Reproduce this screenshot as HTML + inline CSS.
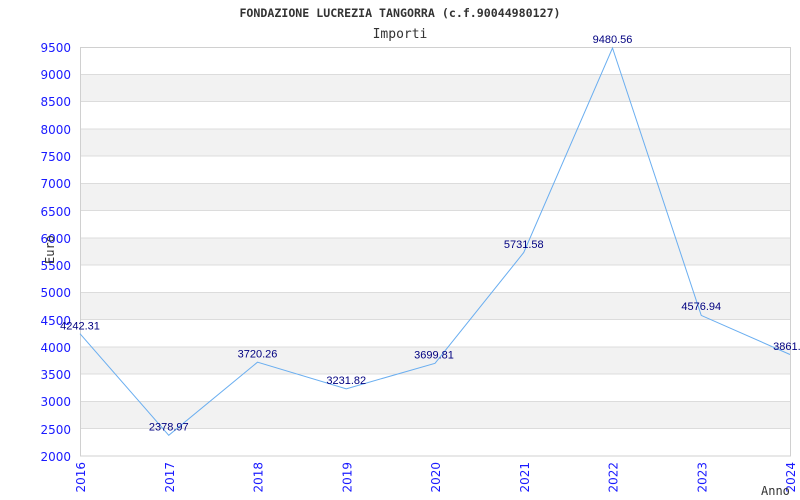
<!DOCTYPE html>
<html><head><meta charset="utf-8"><style>
html,body{margin:0;padding:0;background:#fff;width:800px;height:500px;overflow:hidden}
</style></head><body>
<svg width="800" height="500" xmlns="http://www.w3.org/2000/svg">
<g fill="#f2f2f2">
<rect x="80" y="74.3" width="710" height="27.3"/>
<rect x="80" y="128.8" width="710" height="27.3"/>
<rect x="80" y="183.3" width="710" height="27.3"/>
<rect x="80" y="237.8" width="710" height="27.3"/>
<rect x="80" y="292.4" width="710" height="27.3"/>
<rect x="80" y="346.9" width="710" height="27.3"/>
<rect x="80" y="401.5" width="710" height="27.3"/>
</g>
<g stroke="#dcdcdc" stroke-width="1">
<line x1="80" y1="74.5" x2="790" y2="74.5"/><line x1="80" y1="101.5" x2="790" y2="101.5"/>
<line x1="80" y1="129" x2="790" y2="129"/><line x1="80" y1="156" x2="790" y2="156"/>
<line x1="80" y1="183.5" x2="790" y2="183.5"/><line x1="80" y1="210.5" x2="790" y2="210.5"/>
<line x1="80" y1="238" x2="790" y2="238"/><line x1="80" y1="265" x2="790" y2="265"/>
<line x1="80" y1="292.5" x2="790" y2="292.5"/><line x1="80" y1="319.5" x2="790" y2="319.5"/>
<line x1="80" y1="347" x2="790" y2="347"/><line x1="80" y1="374" x2="790" y2="374"/>
<line x1="80" y1="401.5" x2="790" y2="401.5"/><line x1="80" y1="428.5" x2="790" y2="428.5"/>
</g>
<rect x="80.5" y="47.5" width="710" height="408.5" fill="none" stroke="#d0d0d0"/>
<polyline fill="none" stroke="#6aaef0" stroke-width="1" points="80,333.7 168.75,435.3 257.5,362.2 346.25,388.8 435,363.3 523.75,252.5 612.5,48 701.25,315.4 790,354.5"/>
<g font-family="DejaVu Sans, sans-serif" font-size="12" fill="#1a1aff" text-anchor="end">
<text x="71" y="52">9500</text><text x="71" y="79">9000</text><text x="71" y="106">8500</text>
<text x="71" y="134">8000</text><text x="71" y="161">7500</text><text x="71" y="188">7000</text>
<text x="71" y="216">6500</text><text x="71" y="243">6000</text><text x="71" y="270">5500</text>
<text x="71" y="297">5000</text><text x="71" y="325">4500</text><text x="71" y="352">4000</text>
<text x="71" y="379">3500</text><text x="71" y="406">3000</text><text x="71" y="434">2500</text>
<text x="71" y="461">2000</text>
</g>
<g font-family="DejaVu Sans, sans-serif" font-size="12" fill="#1a1aff" text-anchor="end">
<text transform="translate(85,462) rotate(-90)">2016</text>
<text transform="translate(173.75,462) rotate(-90)">2017</text>
<text transform="translate(262.5,462) rotate(-90)">2018</text>
<text transform="translate(351.25,462) rotate(-90)">2019</text>
<text transform="translate(440,462) rotate(-90)">2020</text>
<text transform="translate(528.75,462) rotate(-90)">2021</text>
<text transform="translate(617.5,462) rotate(-90)">2022</text>
<text transform="translate(706.25,462) rotate(-90)">2023</text>
<text transform="translate(795,462) rotate(-90)">2024</text>
</g>
<g font-family="Liberation Sans, sans-serif" font-size="11" fill="#000080" text-anchor="middle">
<text x="80" y="329.5">4242.31</text>
<text x="168.75" y="430.5">2378.97</text>
<text x="257.5" y="357.5">3720.26</text>
<text x="346.25" y="384">3231.82</text>
<text x="434" y="358.5">3699.81</text>
<text x="523.75" y="248">5731.58</text>
<text x="612.5" y="43">9480.56</text>
<text x="701.25" y="310">4576.94</text>
<text x="790" y="350">3861.2</text>
</g>
<g font-family="DejaVu Sans Mono, Liberation Mono, monospace" fill="#333">
<text x="400" y="17" font-size="11.6" font-weight="bold" text-anchor="middle">FONDAZIONE LUCREZIA TANGORRA (c.f.90044980127)</text>
<text x="400" y="38" font-size="13" text-anchor="middle">Importi</text>
<text transform="translate(54,264) rotate(-90)" font-size="12">Euro</text>
<text x="761" y="495" font-size="12">Anno</text>
</g>
</svg>
</body></html>
